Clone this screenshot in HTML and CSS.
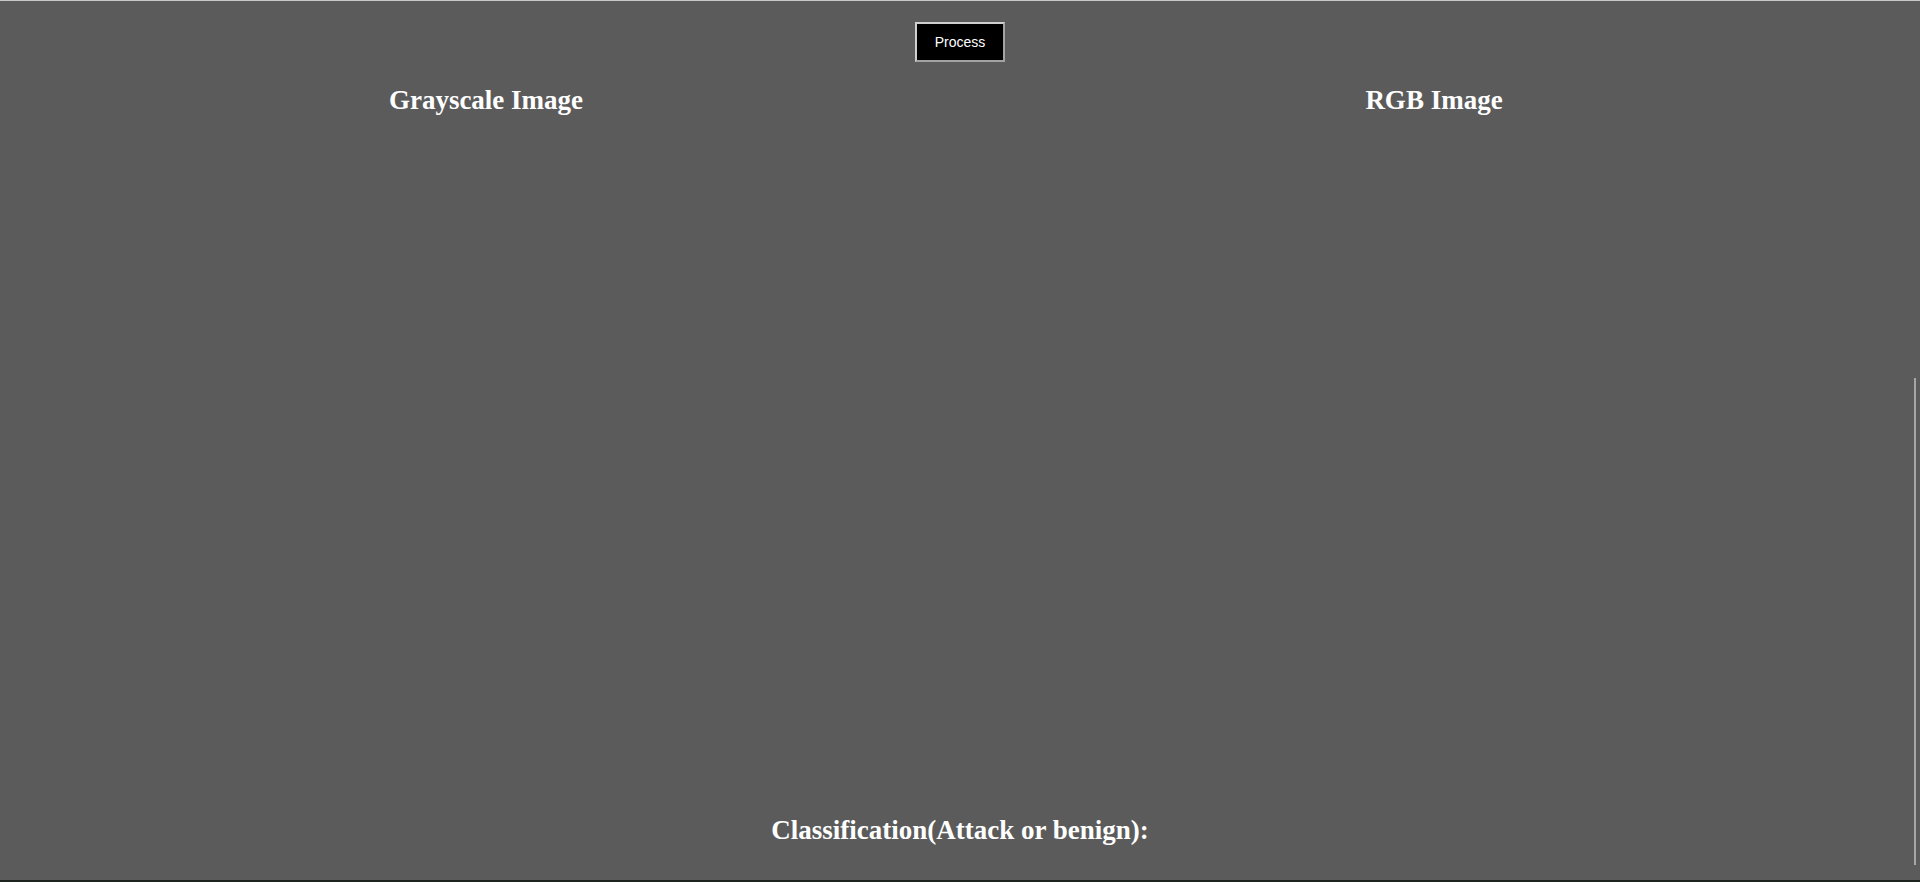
FILE: index.html
```html
<!DOCTYPE html>
<html lang="en">
<head>
<meta charset="utf-8">
<title>Image Classification</title>
<link rel="stylesheet" href="styles.css">
</head>
<body class="page">
  <div class="toolbar">
    <button class="process-btn" type="button">Process</button>
  </div>
  <main class="panels">
    <section class="panel">
      <h2 class="panel-title">Grayscale Image</h2>
    </section>
    <section class="panel">
      <h2 class="panel-title">RGB Image</h2>
    </section>
  </main>
  <h2 class="result">Classification(Attack or benign):</h2>
  <div class="scroll-thumb"></div>
</body>
</html>
```

FILE: styles.css
```css
html, body {
  margin: 0;
  padding: 0;
}

.page {
  position: relative;
  box-sizing: border-box;
  height: 882px;
  overflow: hidden;
  display: flex;
  flex-direction: column;
  background: #5b5b5b;
  border-top: 1px solid #c9c9c9;
  border-bottom: 2px solid #1d2420;
  color: #ffffff;
  font-family: "Liberation Serif", "Times New Roman", serif;
}

.toolbar {
  display: flex;
  justify-content: center;
  padding-top: 21px;
}

.process-btn {
  box-sizing: border-box;
  width: 90px;
  height: 40px;
  margin: 0;
  padding: 0;
  background: #000000;
  color: #ffffff;
  border: 2px solid;
  border-color: #cfcfcf #a3a3a3 #a3a3a3 #cfcfcf;
  font-family: "Liberation Sans", Arial, sans-serif;
  font-size: 14px;
  cursor: pointer;
}

.panels {
  flex: 1;
  display: grid;
  grid-template-columns: 1fr 1fr;
  padding: 0 12px;
}

.panel {
  display: flex;
  flex-direction: column;
  align-items: center;
}

.panel-title,
.result {
  margin: 0;
  font-size: 27px;
  line-height: 32px;
  font-weight: bold;
  text-align: center;
}

.panel-title {
  margin-top: 22px;
}

.result {
  margin-bottom: 34px;
}

.scroll-thumb {
  position: absolute;
  top: 377px;
  right: 4px;
  width: 2px;
  height: 487px;
  background: #a6a6a6;
}
```
